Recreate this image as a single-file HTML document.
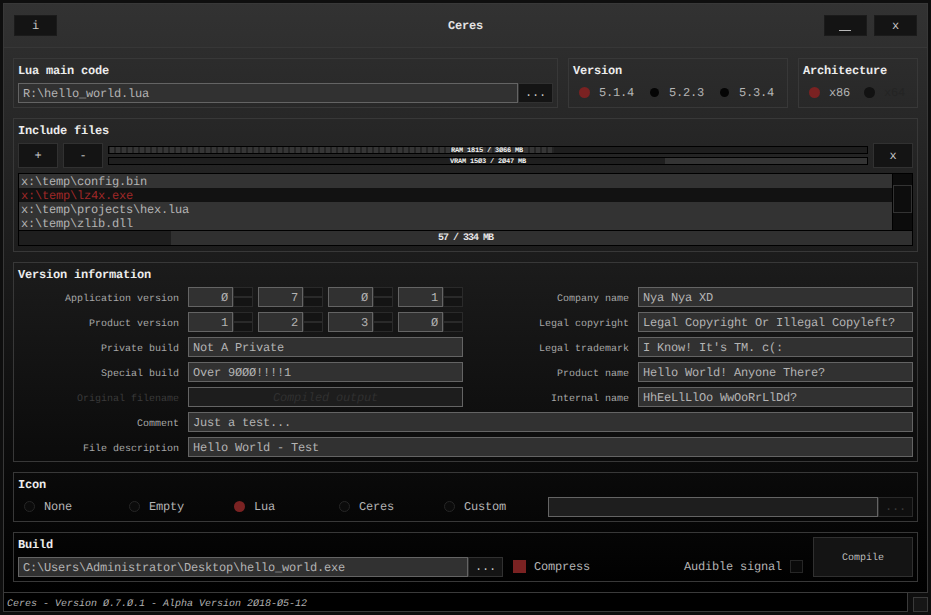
<!DOCTYPE html>
<html><head><meta charset="utf-8">
<style>
*{margin:0;padding:0;box-sizing:border-box}
html,body{width:931px;height:615px;overflow:hidden;background:#0e0e0e}
body{text-rendering:geometricPrecision;position:relative;font-family:"Liberation Mono",monospace;font-size:12px;letter-spacing:-0.2px;color:#b4b4b4}
.a{position:absolute}
.win{left:3px;top:3px;width:925px;height:590px;border:1px solid #383838;background:linear-gradient(#2d2d2d 44px,#000 589px)}
.title{left:4px;top:4px;width:923px;height:44px;background:linear-gradient(#323232,#2f2f2f);border-bottom:1px solid #373737}
.btn{border:1px solid #313131;background:#141414;color:#c8c8c8;text-align:center}
.grp{border:1px solid #383838}
.inp{border:1px solid #646464;background:#313131;white-space:pre;padding-left:4px;color:#b4b4b4}
.gt{font-weight:bold;color:#ececec;white-space:pre;line-height:20px}
.t{white-space:pre;line-height:20px}
.lbl{font-size:10px;letter-spacing:0;color:#a6a6a6;text-align:right;white-space:pre;line-height:20px}
.spbtn{border:1px solid #2a2a2a;background:#141414}
.radio{border-radius:50%}
.bar{border:1px solid #000;background:#1e1e1e}
.seg{position:absolute;left:1px;top:0px;height:6px;background:repeating-linear-gradient(90deg,#363636 0px,#363636 4px,#242424 4px,#242424 6px)}
.vfill{position:absolute;left:0;top:0;height:6px;background:#1f1f1f}
.px{font-size:7px;letter-spacing:-0.2px;font-weight:bold;color:#f0f0f0;line-height:8px;white-space:pre}
.list{position:absolute;border:1px solid #000;background:#000;overflow:hidden}
.row{position:absolute;left:0;width:873px;height:14px;background:#333333;white-space:pre;color:#b4b4b4}
.row span{position:absolute;left:2px;top:-2px;line-height:20px}
.row.sel{background:#121212;color:#a02828}
.sbtrack{position:absolute;left:874px;top:0;width:19px;height:56px;background:#0c0c0c}
.sbthumb{position:absolute;left:874px;top:11px;width:19px;height:28px;border:1px solid #333;background:#0d0d0d}
.pbar{position:absolute;left:0;top:57px;width:893px;height:14px;background:#303030}
.pfill{position:absolute;left:0;top:0;width:152px;height:14px;background:#1e1e1e}
.ptxt{position:absolute;left:0;top:1px;width:893px;text-align:center;line-height:14px;font-size:10px;letter-spacing:-1px;font-weight:bold;color:#e6e6e6}
.lbl.dis{color:#3a3a3a}
.ro{border:1px solid #262626;background:#0b0b0b}
</style></head><body>
<div class="a win" style="left:3px;top:3px;"></div>
<div class="a title" style="left:4px;top:4px;"></div>
<div class="a btn" style="left:14px;top:15px;width:43px;height:21px;border-color:#1b1b1b"></div>
<div class="a t" style="left:14px;top:16px;width:43px;text-align:center;color:#c8c8c8;">i</div>
<div class="a gt" style="left:448px;top:16px;color:#e4e4e4">Ceres</div>
<div class="a btn" style="left:824px;top:15px;width:43px;height:21px;border-color:#1b1b1b"></div>
<div class="a " style="left:839px;top:30px;width:12px;height:1px;background:#b8b8b8"></div>
<div class="a btn" style="left:874px;top:15px;width:43px;height:21px;border-color:#1b1b1b"></div>
<div class="a t" style="left:874px;top:16px;width:43px;text-align:center;color:#c8c8c8;">x</div>
<div class="a grp" style="left:13px;top:58px;width:545px;height:50px;"></div>
<div class="a gt" style="left:18px;top:61px;">Lua main code</div>
<div class="a inp" style="left:18px;top:83px;width:500px;height:20px;"></div>
<div class="a t" style="left:23px;top:84px;">R:\hello_world.lua</div>
<div class="a btn" style="left:518px;top:83px;width:35px;height:20px;"></div>
<div class="a t" style="left:518px;top:83px;width:35px;text-align:center;color:#c8c8c8;">...</div>
<div class="a grp" style="left:568px;top:58px;width:220px;height:50px;"></div>
<div class="a gt" style="left:573px;top:61px;">Version</div>
<div class="a radio" style="left:579.0px;top:87.0px;width:11px;height:11px;background:#7a2222"></div>
<div class="a t" style="left:599px;top:83px;">5.1.4</div>
<div class="a radio" style="left:650.0px;top:88.0px;width:9px;height:9px;background:#050505"></div>
<div class="a t" style="left:669px;top:83px;">5.2.3</div>
<div class="a radio" style="left:720.0px;top:88.0px;width:9px;height:9px;background:#050505"></div>
<div class="a t" style="left:739px;top:83px;">5.3.4</div>
<div class="a grp" style="left:798px;top:58px;width:120px;height:50px;"></div>
<div class="a gt" style="left:803px;top:61px;">Architecture</div>
<div class="a radio" style="left:809.0px;top:87.0px;width:11px;height:11px;background:#7a2222"></div>
<div class="a t" style="left:829px;top:83px;">x86</div>
<div class="a radio" style="left:864.0px;top:87px;width:11px;height:11px;background:#121212"></div>
<div class="a t" style="left:884px;top:83px;color:#242424">x64</div>
<div class="a grp" style="left:13px;top:118px;width:905px;height:134px;"></div>
<div class="a gt" style="left:18px;top:121px;">Include files</div>
<div class="a btn" style="left:18px;top:143px;width:40px;height:25px;"></div>
<div class="a t" style="left:18px;top:146px;width:40px;text-align:center;color:#c8c8c8;">+</div>
<div class="a btn" style="left:63px;top:143px;width:40px;height:25px;"></div>
<div class="a t" style="left:63px;top:146px;width:40px;text-align:center;color:#c8c8c8;">-</div>
<div class="a bar" style="left:108px;top:146px;width:760px;height:8px"><div class="seg" style="width:444px"></div></div>
<div class="a bar" style="left:108px;top:157px;width:760px;height:8px;background:#343434"><div class="vfill" style="width:556px"></div></div>
<div class="a px" style="left:451px;top:147px;">RAM 1815 / 3&#216;66 MB</div>
<div class="a px" style="left:450px;top:158px;">VRAM 15&#216;3 / 2&#216;47 MB</div>
<div class="a btn" style="left:873px;top:143px;width:40px;height:25px;"></div>
<div class="a t" style="left:873px;top:146px;width:40px;text-align:center;color:#c8c8c8;">x</div>
<div class="a list" style="left:18px;top:173px;width:895px;height:73px"><div class="row" style="top:0px"><span>x:\temp\config.bin</span></div><div class="row sel" style="top:14px"><span>x:\temp\lz4x.exe</span></div><div class="row" style="top:28px"><span>x:\temp\projects\hex.lua</span></div><div class="row" style="top:42px"><span>x:\temp\zlib.dll</span></div><div class="sbtrack"></div><div class="sbthumb"></div><div class="pbar"><div class="pfill"></div><div class="ptxt">57 / 334 MB</div></div></div>
<div class="a grp" style="left:13px;top:262px;width:905px;height:200px;"></div>
<div class="a gt" style="left:18px;top:265px;">Version information</div>
<div class="a lbl" style="left:20px;top:290px;width:159px;">Application version</div>
<div class="a lbl" style="left:20px;top:315px;width:159px;">Product version</div>
<div class="a lbl" style="left:20px;top:340px;width:159px;">Private build</div>
<div class="a lbl" style="left:20px;top:365px;width:159px;">Special build</div>
<div class="a lbl dis" style="left:20px;top:390px;width:159px;">Original filename</div>
<div class="a lbl" style="left:20px;top:415px;width:159px;">Comment</div>
<div class="a lbl" style="left:20px;top:440px;width:159px;">File description</div>
<div class="a inp" style="left:188px;top:287px;width:45px;height:20px;"></div>
<div class="a t" style="left:188px;top:288px;width:40px;text-align:right;">&#216;</div>
<div class="a spbtn" style="left:233px;top:287px;width:20px;height:10px;"></div>
<div class="a spbtn" style="left:233px;top:297px;width:20px;height:10px;"></div>
<div class="a inp" style="left:258px;top:287px;width:45px;height:20px;"></div>
<div class="a t" style="left:258px;top:288px;width:40px;text-align:right;">7</div>
<div class="a spbtn" style="left:303px;top:287px;width:20px;height:10px;"></div>
<div class="a spbtn" style="left:303px;top:297px;width:20px;height:10px;"></div>
<div class="a inp" style="left:328px;top:287px;width:45px;height:20px;"></div>
<div class="a t" style="left:328px;top:288px;width:40px;text-align:right;">&#216;</div>
<div class="a spbtn" style="left:373px;top:287px;width:20px;height:10px;"></div>
<div class="a spbtn" style="left:373px;top:297px;width:20px;height:10px;"></div>
<div class="a inp" style="left:398px;top:287px;width:45px;height:20px;"></div>
<div class="a t" style="left:398px;top:288px;width:40px;text-align:right;">1</div>
<div class="a spbtn" style="left:443px;top:287px;width:20px;height:10px;"></div>
<div class="a spbtn" style="left:443px;top:297px;width:20px;height:10px;"></div>
<div class="a inp" style="left:188px;top:312px;width:45px;height:20px;"></div>
<div class="a t" style="left:188px;top:313px;width:40px;text-align:right;">1</div>
<div class="a spbtn" style="left:233px;top:312px;width:20px;height:10px;"></div>
<div class="a spbtn" style="left:233px;top:322px;width:20px;height:10px;"></div>
<div class="a inp" style="left:258px;top:312px;width:45px;height:20px;"></div>
<div class="a t" style="left:258px;top:313px;width:40px;text-align:right;">2</div>
<div class="a spbtn" style="left:303px;top:312px;width:20px;height:10px;"></div>
<div class="a spbtn" style="left:303px;top:322px;width:20px;height:10px;"></div>
<div class="a inp" style="left:328px;top:312px;width:45px;height:20px;"></div>
<div class="a t" style="left:328px;top:313px;width:40px;text-align:right;">3</div>
<div class="a spbtn" style="left:373px;top:312px;width:20px;height:10px;"></div>
<div class="a spbtn" style="left:373px;top:322px;width:20px;height:10px;"></div>
<div class="a inp" style="left:398px;top:312px;width:45px;height:20px;"></div>
<div class="a t" style="left:398px;top:313px;width:40px;text-align:right;">&#216;</div>
<div class="a spbtn" style="left:443px;top:312px;width:20px;height:10px;"></div>
<div class="a spbtn" style="left:443px;top:322px;width:20px;height:10px;"></div>
<div class="a inp" style="left:188px;top:337px;width:275px;height:20px;"></div>
<div class="a t" style="left:193px;top:338px;">Not A Private</div>
<div class="a inp" style="left:188px;top:362px;width:275px;height:20px;"></div>
<div class="a t" style="left:193px;top:363px;">Over 9&#216;&#216;&#216;!!!!1</div>
<div class="a inp" style="left:188px;top:387px;width:275px;height:20px;background:#1d1d1d"></div>
<div class="a t" style="left:188px;top:388px;width:275px;text-align:center;color:#303030;font-style:italic">Compiled output</div>
<div class="a inp" style="left:188px;top:412px;width:725px;height:20px;"></div>
<div class="a t" style="left:193px;top:413px;">Just a test...</div>
<div class="a inp" style="left:188px;top:437px;width:725px;height:20px;"></div>
<div class="a t" style="left:193px;top:438px;">Hello World - Test</div>
<div class="a lbl" style="left:470px;top:290px;width:159px;">Company name</div>
<div class="a inp" style="left:638px;top:287px;width:275px;height:20px;"></div>
<div class="a t" style="left:643px;top:288px;">Nya Nya XD</div>
<div class="a lbl" style="left:470px;top:315px;width:159px;">Legal copyright</div>
<div class="a inp" style="left:638px;top:312px;width:275px;height:20px;"></div>
<div class="a t" style="left:643px;top:313px;">Legal Copyright Or Illegal Copyleft?</div>
<div class="a lbl" style="left:470px;top:340px;width:159px;">Legal trademark</div>
<div class="a inp" style="left:638px;top:337px;width:275px;height:20px;"></div>
<div class="a t" style="left:643px;top:338px;">I Know! It's TM. c(:</div>
<div class="a lbl" style="left:470px;top:365px;width:159px;">Product name</div>
<div class="a inp" style="left:638px;top:362px;width:275px;height:20px;"></div>
<div class="a t" style="left:643px;top:363px;">Hello World! Anyone There?</div>
<div class="a lbl" style="left:470px;top:390px;width:159px;">Internal name</div>
<div class="a inp" style="left:638px;top:387px;width:275px;height:20px;"></div>
<div class="a t" style="left:643px;top:388px;">HhEeLlLlOo WwOoRrLlDd?</div>
<div class="a grp" style="left:13px;top:472px;width:905px;height:50px;"></div>
<div class="a gt" style="left:18px;top:475px;">Icon</div>
<div class="a radio ro" style="left:24.0px;top:501.0px;width:11px;height:11px;"></div>
<div class="a t" style="left:44px;top:497px;">None</div>
<div class="a radio ro" style="left:129.0px;top:501.0px;width:11px;height:11px;"></div>
<div class="a t" style="left:149px;top:497px;">Empty</div>
<div class="a radio" style="left:234.0px;top:501.0px;width:11px;height:11px;background:#7a2222"></div>
<div class="a t" style="left:254px;top:497px;">Lua</div>
<div class="a radio ro" style="left:339.0px;top:501.0px;width:11px;height:11px;"></div>
<div class="a t" style="left:359px;top:497px;">Ceres</div>
<div class="a radio ro" style="left:444.0px;top:501.0px;width:11px;height:11px;"></div>
<div class="a t" style="left:464px;top:497px;">Custom</div>
<div class="a inp" style="left:548px;top:497px;width:330px;height:20px;background:#1e1e1e"></div>
<div class="a btn" style="left:878px;top:497px;width:35px;height:20px;border-color:#2a2a2a;background:#0f0f0f"></div>
<div class="a t" style="left:878px;top:497px;width:35px;text-align:center;color:#c8c8c8;color:#3a3a3a">...</div>
<div class="a grp" style="left:13px;top:532px;width:905px;height:50px;"></div>
<div class="a gt" style="left:18px;top:535px;">Build</div>
<div class="a inp" style="left:18px;top:557px;width:450px;height:20px;"></div>
<div class="a t" style="left:23px;top:558px;">C:\Users\Administrator\Desktop\hello_world.exe</div>
<div class="a btn" style="left:468px;top:557px;width:35px;height:20px;"></div>
<div class="a t" style="left:468px;top:557px;width:35px;text-align:center;color:#c8c8c8;">...</div>
<div class="a " style="left:513px;top:560px;width:13px;height:13px;background:#7a2222"></div>
<div class="a t" style="left:534px;top:557px;">Compress</div>
<div class="a t" style="left:684px;top:557px;">Audible signal</div>
<div class="a " style="left:790px;top:560px;width:13px;height:13px;border:1px solid #262626;background:#0a0a0a"></div>
<div class="a btn" style="left:813px;top:537px;width:100px;height:40px;border-color:#303030"></div>
<div class="a t" style="left:813px;top:548px;width:100px;text-align:center;color:#c8c8c8;font-size:10px;letter-spacing:0;color:#bbb;top:549px">Compile</div>
<div class="a " style="left:3px;top:592px;width:905px;height:20px;border:1px solid #3a3a3a;background:#000"></div>
<div class="a t" style="left:7px;top:595px;font-size:10px;letter-spacing:0;font-style:italic;color:#b0b0b0">Ceres - Version &#216;.7.&#216;.1 - Alpha Version 2&#216;18-&#216;5-12</div>
<div class="a " style="left:913px;top:597px;width:15px;height:15px;border:1px solid #3a3a3a;background:#161616"></div>
</body></html>
